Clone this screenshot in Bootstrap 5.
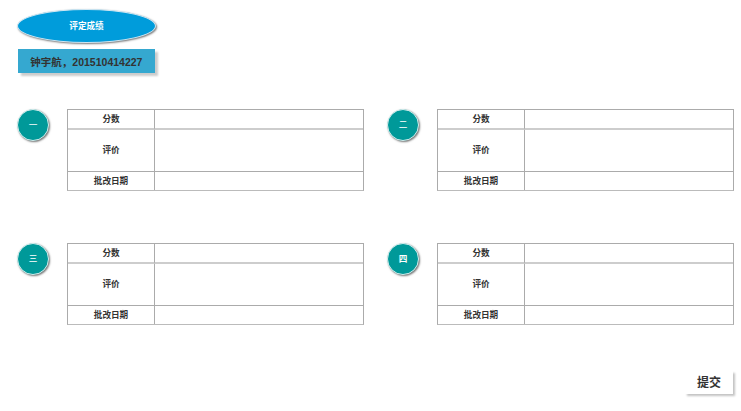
<!DOCTYPE html>
<html lang="zh-CN">
<head>
<meta charset="utf-8">
<meta name="viewport" content="width=device-width, initial-scale=1">
<title>评定成绩</title>
<link href="https://cdn.jsdelivr.net/npm/bootstrap@5.3.0/dist/css/bootstrap.min.css" rel="stylesheet">
<style>
body{font-family:"Liberation Sans","Noto Sans CJK SC",sans-serif;font-size:8.6px;line-height:12px;color:#333;height:411px;overflow:hidden;padding:9px 7px 0 17px}
.title-oval{width:139px;height:34px;border-radius:50%;background:#009cdb;border:1px solid #cfe6f2;box-shadow:1px 1px 2px #777}
.student{width:137.6px;height:24px;margin:6px 0 0 .6px;background:#35a8d0;box-shadow:3px 3px 2px #ccc;font-size:10.5px;padding-top:1px}
.grades{display:grid;grid-template-columns:347px 347px;column-gap:23px;row-gap:52px;margin-top:36px}
.num{width:32px;height:32px;border-radius:50%;background:#009999;border:1px solid #d5eeee;box-shadow:1px 1px 2px #777;flex:none}
.num-thin{font-weight:400}
.sheet{width:297px;height:82px;table-layout:fixed;border-collapse:separate;border-spacing:0;border:1px solid #ababab;border-bottom-color:#bbb}
.sheet th,.sheet td{padding:0;border:0 solid #ababab;vertical-align:middle}
.sheet th{width:87px;border-right-width:1px;text-align:center}
.sheet tr{height:18px}
.sheet tr:first-child{height:20px}
.sheet tr:first-child>*{border-bottom-width:2px;border-bottom-color:#cdcdcd}
.sheet tr:nth-child(2){height:42px}
.sheet tr:nth-child(2)>*{border-bottom-width:1px;padding-bottom:2px}
.submit{width:48px;height:23px;margin:46px 1px 0 auto;background:#fff;border:0;box-shadow:2px 2px 2px #c4c4c4;font-size:12px;color:#333}
</style>
<script src="https://cdn.jsdelivr.net/npm/bootstrap@5.3.0/dist/js/bootstrap.bundle.min.js"></script>
</head>
<body class="bg-white">
<header>
<div class="title-oval d-flex align-items-center justify-content-center text-white fw-bold">评定成绩</div>
<div class="student d-flex align-items-center justify-content-center fw-bold">钟宇航，201510414227</div>
</header>
<main class="grades">
<section class="d-flex justify-content-between"><div class="num num-thin d-flex align-items-center justify-content-center text-white">一</div>
<table class="sheet"><tbody><tr><th>分数</th><td></td></tr><tr><th>评价</th><td></td></tr><tr><th>批改日期</th><td></td></tr></tbody></table></section>
<section class="d-flex justify-content-between"><div class="num num-thin d-flex align-items-center justify-content-center text-white">二</div>
<table class="sheet"><tbody><tr><th>分数</th><td></td></tr><tr><th>评价</th><td></td></tr><tr><th>批改日期</th><td></td></tr></tbody></table></section>
<section class="d-flex justify-content-between"><div class="num num-thin d-flex align-items-center justify-content-center text-white">三</div>
<table class="sheet"><tbody><tr><th>分数</th><td></td></tr><tr><th>评价</th><td></td></tr><tr><th>批改日期</th><td></td></tr></tbody></table></section>
<section class="d-flex justify-content-between"><div class="num d-flex align-items-center justify-content-center text-white fw-bold">四</div>
<table class="sheet"><tbody><tr><th>分数</th><td></td></tr><tr><th>评价</th><td></td></tr><tr><th>批改日期</th><td></td></tr></tbody></table></section>
</main>
<button type="button" class="submit d-flex align-items-center justify-content-center fw-bold p-0">提交</button>
</body>
</html>
